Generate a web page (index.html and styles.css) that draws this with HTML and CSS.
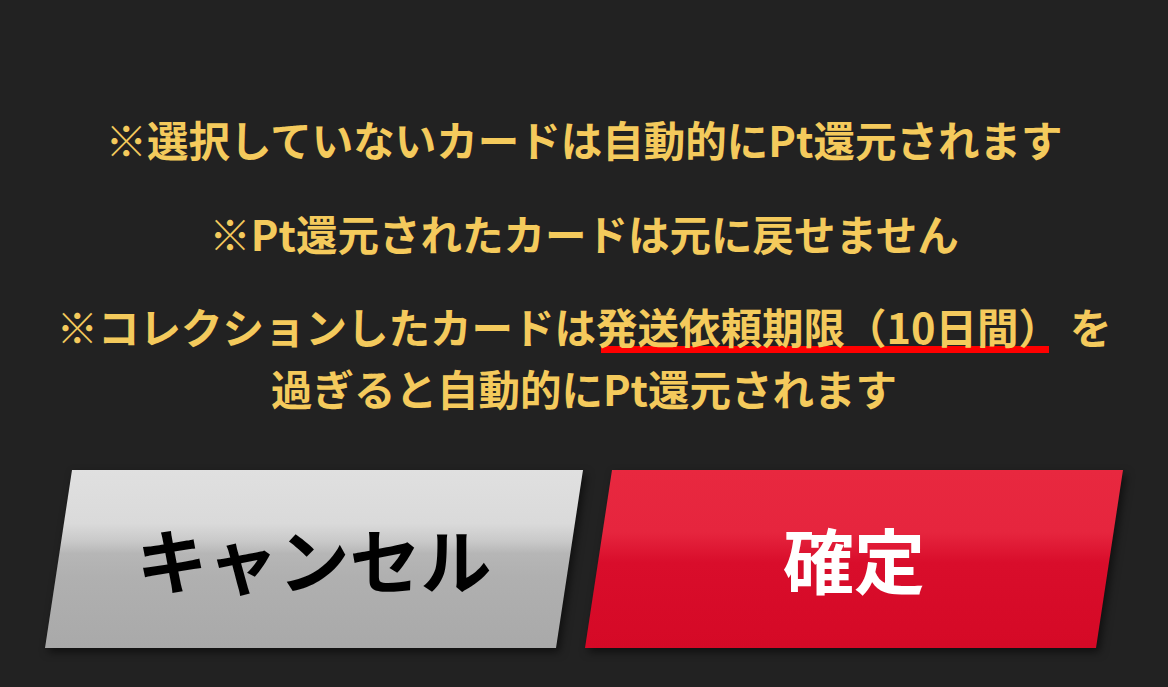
FILE: index.html
```html
<!DOCTYPE html>
<html lang="ja">
<head>
<meta charset="utf-8">
<link rel="stylesheet" href="styles.css">
</head>
<body>
<main class="dialog">
  <div class="notes">
    <p class="note">※選択していないカードは自動的にPt還元されます</p>
    <p class="note">※Pt還元されたカードは元に戻せません</p>
    <p class="note">※コレクションしたカードは<span class="mark">発送依頼期限（10日間）</span>を<br>過ぎると自動的にPt還元されます</p>
  </div>
  <div class="actions">
    <div class="btn-wrap"><button class="btn btn-cancel">キャンセル</button></div>
    <div class="btn-wrap"><button class="btn btn-ok">確定</button></div>
  </div>
</main>
</body>
</html>
```
FILE: styles.css
```css
html, body {
  margin: 0;
  padding: 0;
  background: #222222;
  height: 100%;
}
body {
  font-family: "Noto Sans CJK JP", "Noto Sans", sans-serif;
  overflow: hidden;
}
.dialog {
  display: flex;
  flex-direction: column;
  align-items: center;
  padding-top: 109px;
}
.notes {
  display: flex;
  flex-direction: column;
  gap: 32px;
  align-items: center;
}
.note {
  margin: 0;
  color: #f4ca5c;
  font-weight: 700;
  font-size: 41.5px;
  line-height: 61.5px;
  text-align: center;
  white-space: nowrap;
}
.mark {
  margin-right: 10px;
  background-image: linear-gradient(#ff0000, #ff0000);
  background-repeat: no-repeat;
  background-size: calc(100% - 16px) 7px;
  background-position: 5px 50px;
}
.actions {
  display: flex;
  gap: 2px;
  margin-top: 51px;
}
.btn-wrap {
  filter: drop-shadow(3px 4px 4px rgba(0, 0, 0, 0.55));
}
.btn {
  display: flex;
  align-items: center;
  justify-content: center;
  width: 538px;
  height: 178px;
  border: 0;
  padding: 0 0 4px;
  margin: 0;
  font-family: "Noto Sans CJK JP", sans-serif;
  font-weight: 700;
  font-size: 71px;
  clip-path: polygon(27px 0, 100% 0, calc(100% - 27px) 100%, 0 100%);
}
.btn-cancel {
  color: #000000;
  background: linear-gradient(180deg, #e0e0e0 0%, #dadada 30%, #c9c9c9 40%, #b6b6b6 47%, #b0b0b0 60%, #a9a9a9 100%);
}
.btn-ok {
  color: #ffffff;
  background: linear-gradient(180deg, #e8283f 0%, #e6253e 35%, #d90d2b 52%, #d50926 100%);
}
```
